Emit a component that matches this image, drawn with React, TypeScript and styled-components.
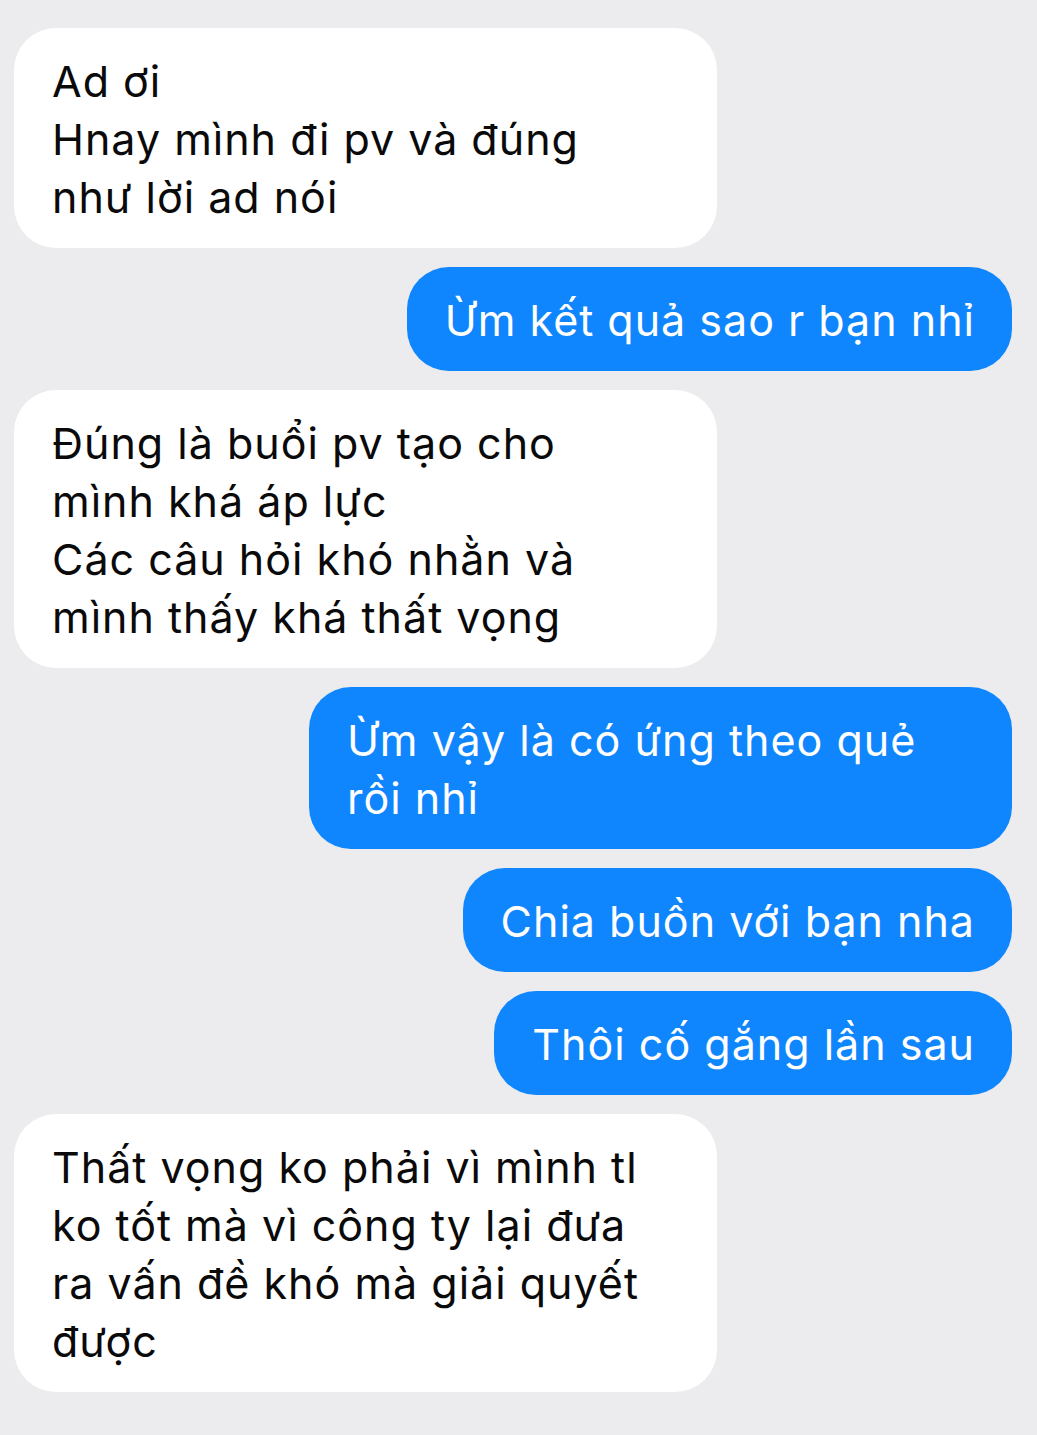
import React from "react";
import styled, { createGlobalStyle } from "styled-components";

const GlobalStyle = createGlobalStyle`
  html, body {
    margin: 0;
    padding: 0;
    background: #ececee;
  }
`;

const Thread = styled.div`
  width: 1037px;
  min-height: 1435px;
  box-sizing: border-box;
  padding: 28px 25px 0 14px;
  display: flex;
  flex-direction: column;
  gap: 19px;
  background: #ececee;
  font-family: Inter, Roboto, "Noto Sans", sans-serif;
`;

const Bubble = styled.div<{ $mine?: boolean; $full?: boolean }>`
  align-self: ${(p) => (p.$mine ? "flex-end" : "flex-start")};
  box-sizing: border-box;
  max-width: 703px;
  width: ${(p) => (p.$full ? "703px" : "auto")};
  padding: 24px 37px 22px 38px;
  border-radius: 42px;
  background: ${(p) => (p.$mine ? "#0f86fd" : "#ffffff")};
  color: ${(p) => (p.$mine ? "#ffffff" : "#0a0a0a")};
  font-size: 43px;
  letter-spacing: 1px;
  line-height: 58px;
  white-space: pre-line;
`;

const messages: { mine: boolean; full: boolean; text: string }[] = [
  { mine: false, full: true, text: "Ad ơi\nHnay mình đi pv và đúng\nnhư lời ad nói" },
  { mine: true, full: false, text: "Ừm kết quả sao r bạn nhỉ" },
  {
    mine: false,
    full: true,
    text: "Đúng là buổi pv tạo cho\nmình khá áp lực\nCác câu hỏi khó nhằn và\nmình thấy khá thất vọng",
  },
  { mine: true, full: true, text: "Ừm vậy là có ứng theo quẻ\nrồi nhỉ" },
  { mine: true, full: false, text: "Chia buồn với bạn nha" },
  { mine: true, full: false, text: "Thôi cố gắng lần sau" },
  {
    mine: false,
    full: true,
    text: "Thất vọng ko phải vì mình tl\nko tốt mà vì công ty lại đưa\nra vấn đề khó mà giải quyết\nđược",
  },
];

export default function App() {
  return (
    <>
      <GlobalStyle />
      <Thread>
        {messages.map((m, i) => (
          <Bubble key={i} $mine={m.mine} $full={m.full}>
            {m.text}
          </Bubble>
        ))}
      </Thread>
    </>
  );
}
